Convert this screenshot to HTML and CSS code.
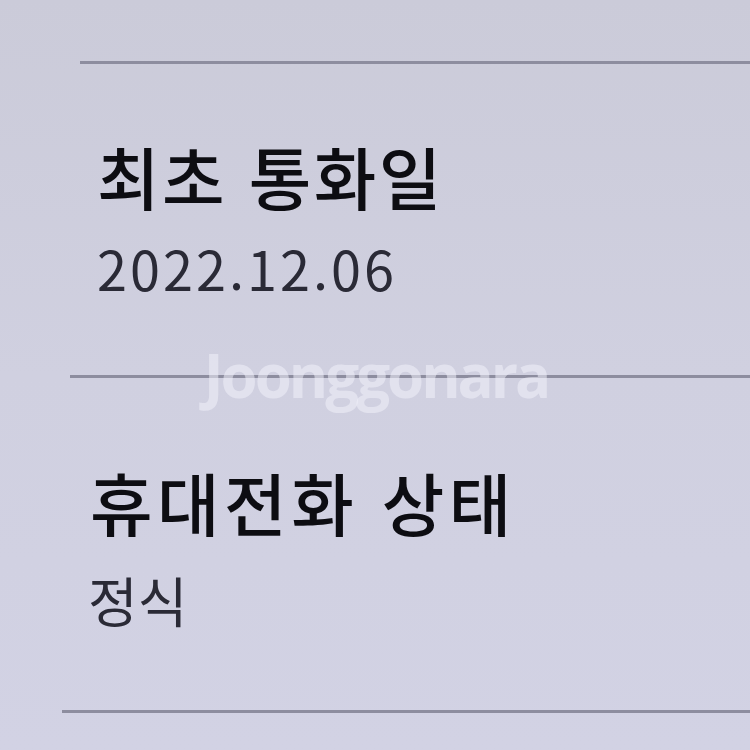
FILE: index.html
```html
<!DOCTYPE html>
<html lang="ko">
<head>
<meta charset="utf-8">
<link rel="stylesheet" href="styles.css">
</head>
<body>
<div class="screen">
  <div class="divider divider-a"></div>
  <div class="item item-a">
    <div class="title">최초 통화일</div>
    <div class="value value-date">2022.12.06</div>
  </div>
  <div class="divider divider-b"></div>
  <div class="item item-b">
    <div class="title">휴대전화 상태</div>
    <div class="value">정식</div>
  </div>
  <div class="divider divider-c"></div>
  <div class="watermark">Joonggonara</div>
</div>
</body>
</html>
```

FILE: styles.css
```css
html, body {
  margin: 0;
  padding: 0;
}
body {
  background: #cfcfe0;
  font-family: "Noto Sans CJK KR", "Noto Sans", sans-serif;
  width: 750px;
  height: 750px;
  overflow: hidden;
}
.screen {
  position: relative;
  width: 750px;
  height: 750px;
  padding-top: 61px;
  box-sizing: border-box;
  background: linear-gradient(180deg, #cbcbd9 0%, #d0d0e0 50%, #d2d2e4 100%);
}
.divider {
  height: 3px;
  background: #8d8d9f;
}
.divider-a { margin-left: 80px; }
.divider-b { margin-left: 70px; }
.divider-c { margin-left: 62px; }
.item {
  display: flex;
  flex-direction: column;
}
.item-a {
  padding: 71px 0 75px 97px;
  gap: 19px;
}
.item-b {
  padding: 83px 0 77px 90px;
  gap: 25px;
}
.title {
  font-size: 68px;
  line-height: 1.2;
  letter-spacing: 2.5px;
  color: #0d0d12;
  font-weight: 500;
}
.item-b .title {
  letter-spacing: 4.5px;
}
.value {
  font-size: 54px;
  line-height: 1.2;
  color: #2a2a36;
}
.value-date {
  letter-spacing: 3px;
}
.item-b .value {
  margin-left: -2px;
}
.watermark {
  position: absolute;
  left: 200px;
  top: 345px;
  width: 352px;
  text-align: center;
  font-family: "Open Sans", sans-serif;
  font-weight: 700;
  font-size: 60px;
  line-height: 1;
  letter-spacing: -3px;
  color: rgba(240, 240, 250, 0.55);
}
```
